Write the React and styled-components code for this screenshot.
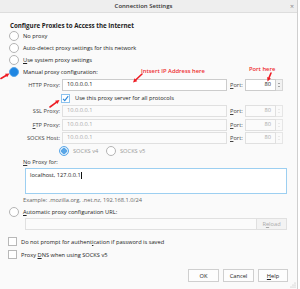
import React from "react";
import styled, { createGlobalStyle } from "styled-components";

const GlobalStyle = createGlobalStyle`
  html, body { margin: 0; padding: 0; }
  body {
    background: #ffffff;
    font-family: "Open Sans", "Noto Sans", sans-serif;
  }
`;

const Dialog = styled.div`
  position: relative;
  width: 298px;
  height: 289px;
  box-sizing: border-box;
  background: #fafafa;
  border-right: 1px solid #cfcfcf;
  display: flex;
  flex-direction: column;
  font-size: 5.7px;
  color: #222;
  overflow: hidden;
`;

const TitleBar = styled.div`
  height: 13px;
  flex: none;
  box-sizing: border-box;
  background: #eeeeee;
  border-bottom: 1px solid #dddddd;
  display: grid;
  grid-template-columns: 1fr auto 1fr;
  align-items: center;
`;

const Title = styled.span`
  grid-column: 2;
  margin-right: 10px;
  font-weight: 600;
  font-size: 6px;
  color: #333;
`;

const Close = styled.span`
  grid-column: 3;
  justify-self: end;
  margin-right: 3px;
  font-size: 7px;
  color: #888;
`;

const Body = styled.div`
  flex: 1;
  display: flex;
  flex-direction: column;
  padding-top: 8px;
`;

const Heading = styled.div`
  height: 9px;
  line-height: 9px;
  padding-left: 10px;
  font-weight: 700;
  font-size: 6.2px;
`;

const OptionRow = styled.div`
  display: flex;
  align-items: center;
  height: ${(p) => p.$h || 12}px;
  padding-left: ${(p) => p.$indent || 9}px;
  gap: ${(p) => p.$gap || 4}px;
  color: #222;
`;

const Radio = styled.span`
  width: 10px;
  height: 10px;
  flex: none;
  box-sizing: border-box;
  border-radius: 50%;
  border: 1px solid ${(p) => (p.$checked ? "#5aa8ea" : "#b4b4b4")};
  background: ${(p) =>
    p.$checked
      ? p.$dim
        ? "radial-gradient(circle, #5aa6e6 0 2.6px, #d9ebfa 3px)"
        : "#1f86e2"
      : "#ffffff"};
`;

const Check = styled.span`
  width: ${(p) => p.$size || 9}px;
  height: ${(p) => p.$size || 9}px;
  flex: none;
  box-sizing: border-box;
  border: 1px solid ${(p) => (p.$checked ? "#8cc2ee" : "#b8b8b8")};
  background: #fff;
  display: flex;
  align-items: center;
  justify-content: center;
`;

const Key = styled.span`
  text-decoration: underline;
`;

const ProxyRow = styled.div`
  display: flex;
  align-items: center;
  height: ${(p) => p.$h || 14}px;
`;

const FieldLabel = styled.span`
  width: 60px;
  text-align: right;
  color: #444;
`;

const TextBox = styled.div`
  width: ${(p) => p.$w}px;
  height: 12px;
  margin-left: ${(p) => p.$ml || 0}px;
  box-sizing: border-box;
  border: 1px solid ${(p) => (p.$disabled ? "#e0e0e0" : "#cccccc")};
  background: ${(p) => (p.$disabled ? "#fbfbfb" : "#ffffff")};
  color: ${(p) => (p.$disabled ? "#a8a8a8" : "#222")};
  display: flex;
  align-items: center;
  padding: 0 4px;
  justify-content: ${(p) => (p.$right ? "flex-end" : "flex-start")};
  line-height: 1;
`;

const PortLabel = styled.span`
  width: 14px;
  margin-left: 3px;
  color: #444;
`;

const PortBox = styled.div`
  display: flex;
  margin-left: 1px;
`;

const Spinner = styled.div`
  width: 7px;
  height: 12px;
  box-sizing: border-box;
  border: 1px solid ${(p) => (p.$disabled ? "#e6e6e6" : "#d6d6d6")};
  border-left: none;
  background: ${(p) => (p.$disabled ? "#fafafa" : "#f1f1f1")};
  display: flex;
  flex-direction: column;
  align-items: center;
  justify-content: center;
  gap: 2px;
`;

const Tri = styled.span`
  width: 0;
  height: 0;
  border-left: 1.5px solid transparent;
  border-right: 1.5px solid transparent;
  ${(p) =>
    p.$down
      ? `border-top: 1.5px solid ${p.$disabled ? "#d8d8d8" : "#555"};`
      : `border-bottom: 1.5px solid ${p.$disabled ? "#d8d8d8" : "#555"};`}
`;

const SocksRow = styled.div`
  display: flex;
  align-items: center;
  height: 12px;
  padding-left: 59px;
  color: #999;
`;

const SocksOption = styled.span`
  display: flex;
  align-items: center;
  gap: 4px;
  width: ${(p) => p.$w}px;
`;

const Caption = styled.div`
  height: ${(p) => p.$h || 10}px;
  line-height: ${(p) => p.$h || 10}px;
  padding-left: 23px;
  color: ${(p) => p.$color || "#333"};
`;

const TextArea = styled.div`
  width: 262px;
  height: 26px;
  margin-left: 25px;
  box-sizing: border-box;
  border: 1px solid #9ccff1;
  background: #fff;
  padding: 2px 4px;
  line-height: 8px;
`;

const Caret = styled.span`
  display: inline-block;
  width: 1px;
  height: 7px;
  background: #111;
  vertical-align: middle;
  margin-left: 0.5px;
`;

const UrlRow = styled.div`
  display: flex;
  height: 12px;
  margin: 1px 0 5px 25px;
`;

const ReloadButton = styled.div`
  width: 30px;
  height: 12px;
  box-sizing: border-box;
  border: 1px solid #e0e0e0;
  border-left: none;
  background: #f3f3f3;
  color: #aaa;
  display: flex;
  align-items: center;
  justify-content: center;
`;

const Footer = styled.div`
  display: flex;
  justify-content: flex-end;
  gap: 4px;
  margin-top: 8px;
  margin-right: 9px;
`;

const Button = styled.div`
  width: ${(p) => p.$w || 31}px;
  height: 13px;
  box-sizing: border-box;
  border: 1px solid #cfcfcf;
  background: #fdfdfd;
  display: flex;
  align-items: center;
  justify-content: center;
  color: #222;
`;

const Note = styled.span`
  position: absolute;
  left: ${(p) => p.$x}px;
  top: ${(p) => p.$y}px;
  color: #ee2a2f;
  font-size: 5.8px;
  font-weight: 600;
  white-space: nowrap;
  line-height: 7px;
`;

const Overlay = styled.svg`
  position: absolute;
  left: 0;
  top: 0;
  pointer-events: none;
`;

const Grip = styled.svg`
  position: absolute;
  right: 1px;
  bottom: 1px;
`;

function Arrow({ x1, y1, x2, y2 }) {
  const a = Math.atan2(y2 - y1, x2 - x1);
  const len = 4;
  const w = 2;
  const bx = x2 - len * Math.cos(a);
  const by = y2 - len * Math.sin(a);
  const px = -Math.sin(a) * w;
  const py = Math.cos(a) * w;
  return (
    <g>
      <line x1={x1} y1={y1} x2={bx} y2={by} stroke="#ee1c24" strokeWidth="1.6" strokeLinecap="round" />
      <polygon points={`${x2},${y2} ${bx + px},${by + py} ${bx - px},${by - py}`} fill="#ee1c24" />
    </g>
  );
}

function Checkmark() {
  return (
    <svg width="7" height="7" viewBox="0 0 7 7">
      <path d="M1 3.8 L2.8 5.6 L6.2 1.2" fill="none" stroke="#2a86d8" strokeWidth="1.1" />
    </svg>
  );
}

function ProxyField({ label, value, disabled, h }) {
  return (
    <ProxyRow $h={h}>
      <FieldLabel>{label}</FieldLabel>
      <TextBox $w={165} $ml={2} $disabled={disabled}>
        {value}
      </TextBox>
      <PortLabel>
        <Key>P</Key>ort:
      </PortLabel>
      <PortBox>
        <TextBox $w={31} $right $disabled={disabled}>
          80
        </TextBox>
        <Spinner $disabled={disabled}>
          <Tri $disabled={disabled} />
          <Tri $down $disabled={disabled} />
        </Spinner>
      </PortBox>
    </ProxyRow>
  );
}

export default function App() {
  return (
    <>
      <GlobalStyle />
      <Dialog>
        <TitleBar>
          <Title>Connection Settings</Title>
          <Close>×</Close>
        </TitleBar>
        <Body>
          <Heading>Configure Proxies to Access the Internet</Heading>
          <OptionRow>
            <Radio />
            <span>No proxy</span>
          </OptionRow>
          <OptionRow>
            <Radio />
            <span>Auto-detect proxy settings for this network</span>
          </OptionRow>
          <OptionRow>
            <Radio />
            <span>
              <Key>U</Key>se system proxy settings
            </span>
          </OptionRow>
          <OptionRow>
            <Radio $checked />
            <span>Manual proxy configuration:</span>
          </OptionRow>

          <ProxyField label="HTTP Proxy:" value="10.0.0.0.1" />
          <OptionRow $h={12} $indent={61} $gap={5}>
            <Check $checked>
              <Checkmark />
            </Check>
            <span>Use this proxy server for all protocols</span>
          </OptionRow>
          <ProxyField label="SSL Proxy:" value="10.0.0.0.1" disabled />
          <ProxyField label={<><Key>F</Key>TP Proxy:</>} value="10.0.0.0.1" disabled h={13} />
          <ProxyField label="SOCKS Host:" value="10.0.0.0.1" disabled />

          <SocksRow>
            <SocksOption $w={47}>
              <Radio $checked $dim />
              <span>SOCKS v4</span>
            </SocksOption>
            <SocksOption $w={60}>
              <Radio />
              <span>SOCKS v5</span>
            </SocksOption>
          </SocksRow>

          <Caption $h={11}>
            <Key>N</Key>o Proxy for:
          </Caption>
          <TextArea>
            localhost, 127.0.0.1
            <Caret />
          </TextArea>
          <Caption $h={12} $color="#666">
            Example: .mozilla.org, .net.nz, 192.168.1.0/24
          </Caption>
          <OptionRow $h={11}>
            <Radio />
            <span>
              <Key>A</Key>utomatic proxy configuration URL:
            </span>
          </OptionRow>
          <UrlRow>
            <TextBox $w={232} $disabled />
            <ReloadButton>
              R<Key>e</Key>load
            </ReloadButton>
          </UrlRow>
          <OptionRow $h={13} $indent={8}>
            <Check />
            <span>
              Do not prompt for authent<Key>i</Key>cation if password is saved
            </span>
          </OptionRow>
          <OptionRow $h={13} $indent={8}>
            <Check />
            <span>
              Proxy <Key>D</Key>NS when using SOCKS v5
            </span>
          </OptionRow>

          <Footer>
            <Button>OK</Button>
            <Button>Cancel</Button>
            <Button $w={30}>
              <Key>H</Key>elp
            </Button>
          </Footer>
        </Body>

        <Note $x={141} $y={68}>Intsert IP Address here</Note>
        <Note $x={249} $y={66}>Port here</Note>
        <Overlay width="298" height="289">
          <Arrow x1={1} y1={78.5} x2={9.5} y2={73.5} />
          <Arrow x1={142} y1={74} x2={133} y2={82.5} />
          <Arrow x1={271} y1={73} x2={267.5} y2={81.5} />
          <Arrow x1={50} y1={107} x2={59.5} y2={100} />
        </Overlay>
        <Grip width="6" height="6" viewBox="0 0 6 6">
          <circle cx="5" cy="1" r="0.5" fill="#aaa" />
          <circle cx="3" cy="3" r="0.5" fill="#aaa" />
          <circle cx="5" cy="3" r="0.5" fill="#aaa" />
          <circle cx="1" cy="5" r="0.5" fill="#aaa" />
          <circle cx="3" cy="5" r="0.5" fill="#aaa" />
          <circle cx="5" cy="5" r="0.5" fill="#aaa" />
        </Grip>
      </Dialog>
    </>
  );
}
